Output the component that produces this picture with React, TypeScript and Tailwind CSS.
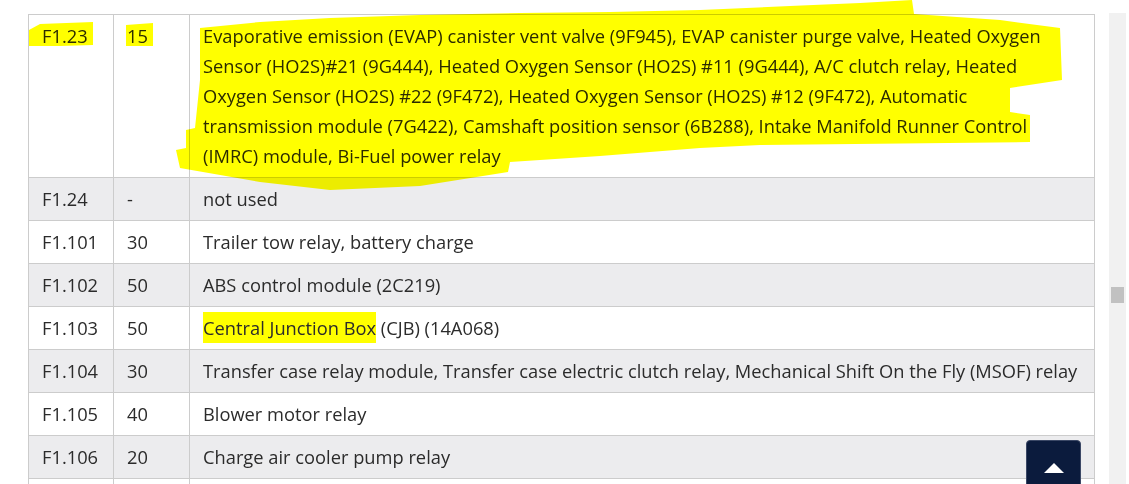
import React from 'react'

type Row = { fuse: string; amp: string; desc: React.ReactNode }

const rows: Row[] = [
  {
    fuse: 'F1.23',
    amp: '15',
    desc:
      'Evaporative emission (EVAP) canister vent valve (9F945), EVAP canister purge valve, Heated Oxygen Sensor (HO2S)#21 (9G444), Heated Oxygen Sensor (HO2S) #11 (9G444), A/C clutch relay, Heated Oxygen Sensor (HO2S) #22 (9F472), Heated Oxygen Sensor (HO2S) #12 (9F472), Automatic transmission module (7G422), Camshaft position sensor (6B288), Intake Manifold Runner Control (IMRC) module, Bi-Fuel power relay',
  },
  { fuse: 'F1.24', amp: '-', desc: 'not used' },
  { fuse: 'F1.101', amp: '30', desc: 'Trailer tow relay, battery charge' },
  { fuse: 'F1.102', amp: '50', desc: 'ABS control module (2C219)' },
  {
    fuse: 'F1.103',
    amp: '50',
    desc: (
      <>
        <span className="bg-[#ffff00] py-[3px]">Central Junction Box</span> (CJB) (14A068)
      </>
    ),
  },
  {
    fuse: 'F1.104',
    amp: '30',
    desc: 'Transfer case relay module, Transfer case electric clutch relay, Mechanical Shift On the Fly (MSOF) relay',
  },
  { fuse: 'F1.105', amp: '40', desc: 'Blower motor relay' },
  { fuse: 'F1.106', amp: '20', desc: 'Charge air cooler pump relay' },
  // next row only peeks in at the bottom edge
  { fuse: '', amp: '', desc: '' },
]

// marker strokes drawn over the screenshot
function Highlights() {
  return (
    <svg
      className="pointer-events-none absolute left-0 top-0 mix-blend-multiply"
      width="1129"
      height="484"
      viewBox="0 0 1129 484"
    >
      <g fill="#ffff00">
        <polygon points="29,30 40,24 93,22 93,45 60,46 29,46" />
        <polygon points="126,25 153,23 153,46 126,46" />
        <polygon points="200,28 260,22 330,18 420,15 520,13 610,12 700,10 790,6 860,3 912,0 914,14 1000,20 1060,28 1062,80 1010,88 1010,112 1030,115 1030,142 760,145 700,148 600,156 510,162 508,172 420,186 330,190 260,182 180,168 176,150 186,148 186,130 195,128 200,80" />
      </g>
    </svg>
  )
}

export default function App() {
  return (
    <div
      className="relative h-[484px] w-[1129px] overflow-hidden bg-white text-[#2b2b2b]"
      style={{ fontFamily: '"Open Sans", "Noto Sans", sans-serif' }}
    >
      <div className="flex h-full">
        <div className="w-[1109px] pl-[28px] pt-[14px]">
          <table className="w-[1067px] border-collapse text-[18.3px] leading-[30px]">
            <colgroup>
              <col className="w-[85px]" />
              <col className="w-[76px]" />
              <col />
            </colgroup>
            <tbody>
              {rows.map((r, i) => (
                <tr key={i} className={i % 2 === 1 ? 'bg-[#ececee]' : 'bg-white'}>
                  <td className="h-[43px] border border-[#cccccc] px-[13px] py-[6px] align-top">{r.fuse}</td>
                  <td className="h-[43px] border border-[#cccccc] px-[13px] py-[6px] align-top">{r.amp}</td>
                  <td className="h-[43px] border border-[#cccccc] px-[13px] py-[6px] align-top">{r.desc}</td>
                </tr>
              ))}
            </tbody>
          </table>
        </div>
        {/* scrollbar */}
        <div className="mt-[13px] h-[471px] w-[17px] bg-[#f1f1f1] pt-[274px] pl-[2px]">
          <div className="h-[16px] w-[13px] bg-[#c1c1c1]" />
        </div>
      </div>

      <Highlights />

      {/* back to top */}
      <button className="absolute left-[1026px] top-[440px] flex h-[56px] w-[55px] justify-center rounded-[4px] border border-[#3b4866] bg-[#0b1b3d] pt-[22px]">
        <span className="block h-0 w-0 border-x-[10px] border-b-[10px] border-x-transparent border-b-white" />
      </button>
    </div>
  )
}
